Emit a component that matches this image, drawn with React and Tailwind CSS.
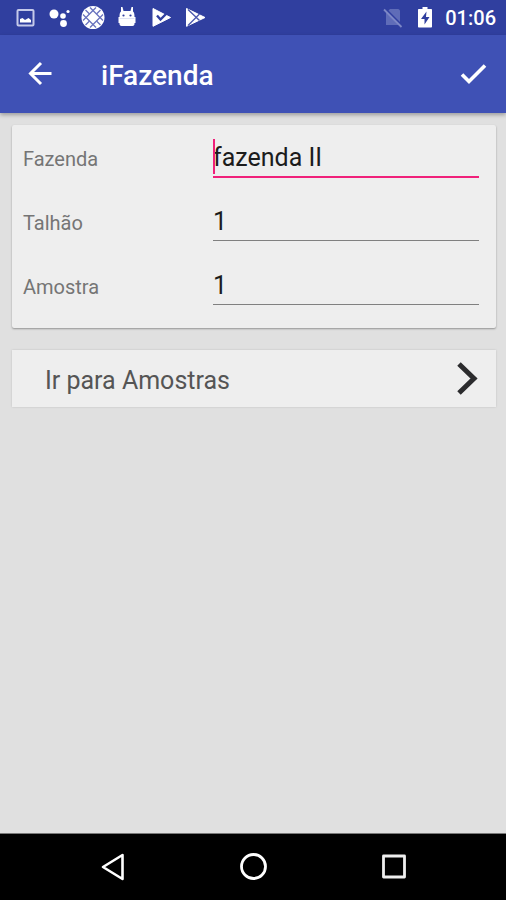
import { useState } from 'react'

const campos = [
  { id: 'fazenda', label: 'Fazenda', inicial: 'fazenda II' },
  { id: 'talhao', label: 'Talhão', inicial: '1' },
  { id: 'amostra', label: 'Amostra', inicial: '1' },
]

function BarraStatus() {
  return (
    <div className="flex h-[35px] items-center justify-between bg-[#303f9f] pl-[13px] pr-[10px] text-white">
      <div className="flex items-center gap-[10px]">
        {/* imagem */}
        <svg className="size-6" viewBox="0 0 24 24" fill="none">
          <rect x="4.5" y="4" width="16" height="15.5" rx="1" stroke="#c5caea" strokeWidth="2" />
          <path d="M7 16.500V13l2.500-1 2.500 2 3.500-2L18 14v2.500z" fill="#fff" />
        </svg>
        {/* assistente */}
        <svg className="size-6" viewBox="0 0 24 24" fill="#fff">
          <circle cx="7" cy="8" r="4.500" />
          <circle cx="16" cy="10" r="2.800" />
          <circle cx="16.500" cy="17.500" r="3.400" />
          <circle cx="21" cy="5.500" r="1.600" />
        </svg>
        {/* bola */}
        <svg className="size-6" viewBox="0 0 24 24">
          <circle cx="12" cy="11.500" r="11.500" fill="#fff" />
          <g fill="none" stroke="#6973be" strokeWidth="1.300">
            <path d="M12 4.500l7 7-7 7-7-7z" />
            <path d="M4.500 4l4 4M19.500 4l-4 4M4.500 19l4-4M19.500 19l-4-4" />
            <path d="M9 1.500l3 3 3-3M9 21.500l3-3 3 3M2 8.500l3 3-3 3M22 8.500l-3 3 3 3" />
          </g>
        </svg>
        {/* android */}
        <svg className="size-6" viewBox="0 0 24 24">
          <path d="M6 1h1.500l1 4h7l1-4H18v4.500c1.200 1 1.500 2.500 1.500 5.500h1v6h-1v1c0 1.200-1 2-2 2h-11c-1 0-2-.8-2-2v-1h-1v-6h1c0-3 .3-4.500 1.500-5.500z" fill="#fff" />
          <path d="M4.500 12.500h15" stroke="#dfe2f4" />
          <circle cx="8.500" cy="9.500" r="1.100" fill="#303f9f" />
          <circle cx="15.500" cy="9.500" r="1.100" fill="#303f9f" />
        </svg>
        {/* play protegido */}
        <svg className="size-6" viewBox="0 0 24 24">
          <path d="M4 2.500v17.800L21.500 11.500z" fill="#fff" stroke="#fff" strokeLinejoin="round" />
          <path d="M8 9.500l3.500 4L20 5" fill="none" stroke="#303f9f" strokeWidth="2.400" />
        </svg>
        {/* play store */}
        <svg className="size-6" viewBox="0 0 24 24">
          <path d="M3.500 2.500v17.800L22 11.500z" fill="#fff" stroke="#fff" strokeLinejoin="round" />
          <path d="M5 3.500l11.500 11M5 19.500L16.500 8" fill="none" stroke="#4c59ae" strokeWidth="1.400" />
        </svg>
      </div>
      <div className="flex items-center">
        {/* sem chip */}
        <svg className="size-6" viewBox="0 0 24 24">
          <path d="M9 3h8c1 0 2 1 2 2v14H5V7z" fill="#5f6cb8" />
          <path d="M4.500 3L21 19.500" stroke="#303f9f" strokeWidth="2" />
          <path d="M3 3.500l17.500 17.500" stroke="#7d88c6" strokeWidth="1.800" />
        </svg>
        {/* bateria */}
        <svg className="ml-2 size-6" viewBox="0 0 24 24">
          <path d="M9.500 1h5v2H18c.6 0 1 .4 1 1v16.500c0 .6-.4 1-1 1H6c-.6 0-1-.4-1-1V4c0-.6.400-1 1-1h3.500z" fill="#fff" />
          <path d="M13.500 5.500L8 13h3.500v5.500L16.500 11H13z" fill="#303f9f" />
        </svg>
        <span className="ml-2 text-xl font-medium leading-6">01:06</span>
      </div>
    </div>
  )
}

function BarraNavegacao() {
  return (
    <nav className="flex h-[67px] items-center justify-center gap-[108px] border-t border-[#7a7a7a] bg-black">
      <button type="button" aria-label="Voltar">
        <svg className="size-8" viewBox="0 0 32 32" fill="none" stroke="#fff" strokeWidth="2.600" strokeLinejoin="round">
          <path d="M25.500 4v24L6 16z" />
        </svg>
      </button>
      <button type="button" aria-label="Início">
        <svg className="size-8" viewBox="0 0 32 32" fill="none" stroke="#fff" strokeWidth="2.800">
          <circle cx="16.500" cy="15.500" r="12" />
        </svg>
      </button>
      <button type="button" aria-label="Recentes">
        <svg className="size-8" viewBox="0 0 32 32" fill="none" stroke="#eee" strokeWidth="2.800" strokeLinejoin="round">
          <rect x="6.500" y="5" width="21" height="21" />
        </svg>
      </button>
    </nav>
  )
}

export default function App() {
  const [valores, setValores] = useState(() =>
    Object.fromEntries(campos.map((c) => [c.id, c.inicial]))
  )
  const [ativo, setAtivo] = useState('fazenda')

  return (
    <div className="flex min-h-screen flex-col bg-[#e0e0e0] font-['Roboto',sans-serif]">
      <BarraStatus />
      <header className="flex h-[78px] items-center bg-[#3f51b5] pl-6 pr-[17px] text-white shadow-[0_2px_4px_rgba(0,0,0,0.3)]">
        <button type="button" aria-label="Voltar">
          <svg className="size-8" viewBox="0 0 32 32" fill="none" stroke="#fff" strokeWidth="3">
            <path d="M27.500 15.500H7M17 5L6.500 15.500 17 26" />
          </svg>
        </button>
        <h1 className="ml-[45px] flex-1 pt-1 text-[28px] font-medium leading-8">iFazenda</h1>
        <button type="button" aria-label="Salvar">
          <svg className="size-8" viewBox="0 0 32 32" fill="none" stroke="#fff" strokeWidth="3.600">
            <path d="M5 16.500l7 7L28 7.500" />
          </svg>
        </button>
      </header>

      <main className="flex flex-1 flex-col gap-[22px] pb-4 pl-3 pr-[10px] pt-3">
        <form
          className="rounded-[2px] bg-[#eeeeee] pb-[23px] pl-[11px] pr-[17px] pt-3 shadow-[0_1px_2px_rgba(0,0,0,0.35)]"
          onSubmit={(e) => e.preventDefault()}
        >
          <div className="flex flex-col gap-6">
            {campos.map((c) => (
              <div key={c.id} className="flex h-10 items-center">
                <label htmlFor={c.id} className="w-[190px] shrink-0 pt-1 text-xl leading-6 text-[#757575]">
                  {c.label}
                </label>
                <div
                  className={
                    ativo === c.id
                      ? 'relative min-w-0 flex-1 border-b-2 border-[#f0207a]'
                      : 'relative min-w-0 flex-1 border-b border-[#808080]'
                  }
                >
                  <input
                    id={c.id}
                    type="text"
                    value={valores[c.id]}
                    onFocus={() => setAtivo(c.id)}
                    onChange={(e) => setValores({ ...valores, [c.id]: e.target.value })}
                    className="block h-[39px] w-full bg-transparent pt-[2px] text-[25px] text-[#1c1c1c] caret-transparent outline-none"
                  />
                  {ativo === c.id && <span className="absolute left-0 top-[2px] h-[35px] w-[2px] bg-[#f0207a]" />}
                </div>
              </div>
            ))}
          </div>
        </form>

        <button
          type="button"
          className="flex h-[57px] items-center justify-between bg-[#eeeeee] pl-[33px] pr-3 text-left text-[25px] text-[#555555] shadow-[0_0_2px_rgba(0,0,0,0.15)]"
        >
          <span className="pt-1 leading-8">Ir para Amostras</span>
          <svg className="size-[34px]" viewBox="0 0 34 34" fill="none" stroke="#2b2b2d" strokeWidth="5">
            <path d="M9 2l15 14.500L9 31" />
          </svg>
        </button>
      </main>

      <BarraNavegacao />
    </div>
  )
}
